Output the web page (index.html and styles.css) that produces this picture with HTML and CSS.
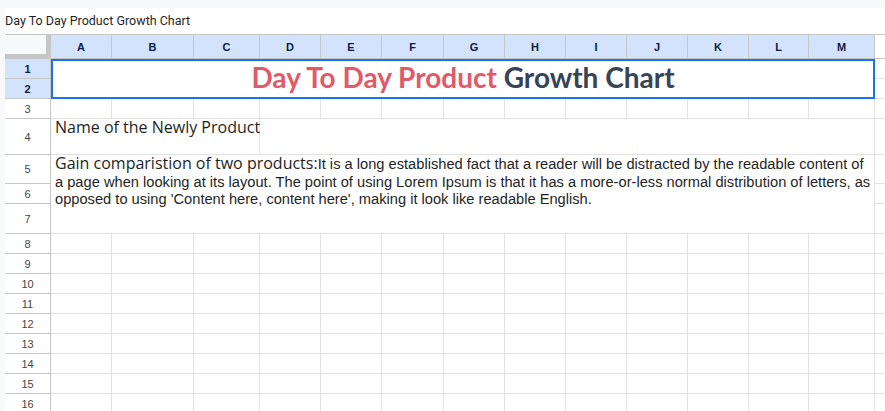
FILE: index.html
```html
<!DOCTYPE html>
<html>
<head>
<meta charset="utf-8">
<link rel="stylesheet" href="styles.css">
</head>
<body>
<div class="app">
  <div class="doc-title">Day To Day Product Growth Chart</div>
  <div class="sheet">
    <!-- header row -->
    <div class="corner"></div>
    <div class="colhead">A</div><div class="colhead">B</div><div class="colhead">C</div><div class="colhead">D</div><div class="colhead">E</div><div class="colhead">F</div><div class="colhead">G</div><div class="colhead">H</div><div class="colhead">I</div><div class="colhead">J</div><div class="colhead">K</div><div class="colhead">L</div><div class="colhead">M</div><div class="colhead blank"></div>

    <!-- rows 1-2 -->
    <div class="rowhead sel r1">1</div>
    <div class="rowhead sel r2">2</div>
    <div class="title-cell"><span class="title-text"><span class="t-red">Day To Day Product</span> <span class="t-dark">Growth Chart</span></span></div>
    <div class="cell n r1"></div>
    <div class="cell n r2"></div>

    <!-- row 3 -->
    <div class="rowhead">3</div>
    <div class="cell"></div><div class="cell"></div><div class="cell"></div><div class="cell"></div><div class="cell"></div><div class="cell"></div><div class="cell"></div><div class="cell"></div><div class="cell"></div><div class="cell"></div><div class="cell"></div><div class="cell"></div><div class="cell"></div><div class="cell n"></div>

    <!-- row 4 -->
    <div class="rowhead">4</div>
    <div class="cell name-cell">Name of the Newly Product</div>
    <div class="cell span-dm"></div>
    <div class="cell n"></div>

    <!-- rows 5-7 -->
    <div class="rowhead r5">5</div>
    <div class="rowhead r6">6</div>
    <div class="rowhead r7">7</div>
    <div class="cell desc-cell"><span class="desc-lead">Gain comparistion of two products:</span>It is a long established fact that a reader will be distracted by the readable content of a page when looking at its layout. The point of using Lorem Ipsum is that it has a more-or-less normal distribution of letters, as opposed to using 'Content here, content here', making it look like readable English.</div>
    <div class="cell n r5"></div>
    <div class="cell n r6"></div>
    <div class="cell n r7"></div>

    <!-- rows 8-16 -->
    <div class="rowhead">8</div><div class="cell"></div><div class="cell"></div><div class="cell"></div><div class="cell"></div><div class="cell"></div><div class="cell"></div><div class="cell"></div><div class="cell"></div><div class="cell"></div><div class="cell"></div><div class="cell"></div><div class="cell"></div><div class="cell"></div><div class="cell n"></div>
    <div class="rowhead">9</div><div class="cell"></div><div class="cell"></div><div class="cell"></div><div class="cell"></div><div class="cell"></div><div class="cell"></div><div class="cell"></div><div class="cell"></div><div class="cell"></div><div class="cell"></div><div class="cell"></div><div class="cell"></div><div class="cell"></div><div class="cell n"></div>
    <div class="rowhead">10</div><div class="cell"></div><div class="cell"></div><div class="cell"></div><div class="cell"></div><div class="cell"></div><div class="cell"></div><div class="cell"></div><div class="cell"></div><div class="cell"></div><div class="cell"></div><div class="cell"></div><div class="cell"></div><div class="cell"></div><div class="cell n"></div>
    <div class="rowhead">11</div><div class="cell"></div><div class="cell"></div><div class="cell"></div><div class="cell"></div><div class="cell"></div><div class="cell"></div><div class="cell"></div><div class="cell"></div><div class="cell"></div><div class="cell"></div><div class="cell"></div><div class="cell"></div><div class="cell"></div><div class="cell n"></div>
    <div class="rowhead">12</div><div class="cell"></div><div class="cell"></div><div class="cell"></div><div class="cell"></div><div class="cell"></div><div class="cell"></div><div class="cell"></div><div class="cell"></div><div class="cell"></div><div class="cell"></div><div class="cell"></div><div class="cell"></div><div class="cell"></div><div class="cell n"></div>
    <div class="rowhead">13</div><div class="cell"></div><div class="cell"></div><div class="cell"></div><div class="cell"></div><div class="cell"></div><div class="cell"></div><div class="cell"></div><div class="cell"></div><div class="cell"></div><div class="cell"></div><div class="cell"></div><div class="cell"></div><div class="cell"></div><div class="cell n"></div>
    <div class="rowhead">14</div><div class="cell"></div><div class="cell"></div><div class="cell"></div><div class="cell"></div><div class="cell"></div><div class="cell"></div><div class="cell"></div><div class="cell"></div><div class="cell"></div><div class="cell"></div><div class="cell"></div><div class="cell"></div><div class="cell"></div><div class="cell n"></div>
    <div class="rowhead">15</div><div class="cell"></div><div class="cell"></div><div class="cell"></div><div class="cell"></div><div class="cell"></div><div class="cell"></div><div class="cell"></div><div class="cell"></div><div class="cell"></div><div class="cell"></div><div class="cell"></div><div class="cell"></div><div class="cell"></div><div class="cell n"></div>
    <div class="rowhead">16</div><div class="cell"></div><div class="cell"></div><div class="cell"></div><div class="cell"></div><div class="cell"></div><div class="cell"></div><div class="cell"></div><div class="cell"></div><div class="cell"></div><div class="cell"></div><div class="cell"></div><div class="cell"></div><div class="cell"></div><div class="cell n"></div>
  </div>
</div>
</body>
</html>
```

FILE: styles.css
```css
html, body {
  margin: 0;
  padding: 0;
  background: #f8f9fa;
  overflow: hidden;
}

.app {
  margin: 8px 0 0 5px;
  background: #ffffff;
  height: 403px;
}

.doc-title {
  height: 26px;
  box-sizing: border-box;
  padding-top: 5px;
  font-family: Roboto, "Liberation Sans", sans-serif;
  font-size: 12.5px;
  line-height: 15px;
  color: #1f1f1f;
}

.sheet {
  display: grid;
  grid-template-columns: 46px 61px 82px 66px 61px 61px 62px 61px 61px 61px 61px 61px 60px 66px 1fr;
  grid-template-rows: 25px 20px 20px 20px 36px 29px 20px 30px repeat(9, 20px);
  font-family: "Liberation Sans", Arial, sans-serif;
}

.sheet > div {
  box-sizing: border-box;
  min-width: 0;
}

.corner {
  background: #f8f9fa;
  border-top: 1px solid #c4c7c5;
  border-right: 5px solid #c4c7c5;
  border-bottom: 5px solid #c4c7c5;
}

.colhead {
  background: #d3e3fd;
  border-top: 1px solid #c4c7c5;
  border-right: 1px solid #c4c7c5;
  border-bottom: 1px solid #c4c7c5;
  display: flex;
  align-items: center;
  justify-content: center;
  font-size: 11px;
  font-weight: 700;
  color: #0b1c3f;
}

.colhead.blank {
  background: #ffffff;
  border-right: none;
}

.rowhead {
  grid-column: 1;
  background: #ffffff;
  border-right: 1px solid #c4c7c5;
  border-bottom: 1px solid #c4c7c5;
  display: flex;
  align-items: center;
  justify-content: center;
  font-size: 11px;
  color: #444746;
}

.rowhead.sel {
  background: #d3e3fd;
  color: #0b1c3f;
  font-weight: 700;
}

.r1 { grid-row: 2; }
.r2 { grid-row: 3; }
.r5 { grid-row: 6; }
.r6 { grid-row: 7; }
.r7 { grid-row: 8; }

.cell {
  border-right: 1px solid #e2e2e2;
  border-bottom: 1px solid #e2e2e2;
}

.cell.n {
  grid-column: 15;
  border-right: none;
}

.title-cell {
  grid-column: 2 / 15;
  grid-row: 2 / 4;
  border: 2px solid #1a73e8;
  display: flex;
  align-items: center;
  justify-content: center;
  padding-bottom: 5px;
  font-family: Lato, "Open Sans", sans-serif;
  font-weight: 700;
  font-size: 28px;
}

.title-text {
  white-space: pre;
}

.t-red { color: #e05a6a; }
.t-dark { color: #374357; }

.name-cell {
  grid-column: 2 / 5;
  padding: 0 0 0 4px;
  font-family: "Open Sans", "Noto Sans", sans-serif;
  font-size: 16px;
  line-height: 17.5px;
  color: #1f1f1f;
  white-space: nowrap;
}

.span-dm {
  grid-column: 5 / 15;
  grid-row: 5;
}

.desc-cell {
  grid-column: 2 / 15;
  grid-row: 6 / 9;
  padding: 0 0 0 4px;
  font-family: "Liberation Sans", Arial, sans-serif;
  font-size: 14.67px;
  line-height: 17.5px;
  color: #1f1f1f;
}

.desc-lead {
  font-family: "Open Sans", "Noto Sans", sans-serif;
  font-size: 16px;
  line-height: 17.5px;
}
```
